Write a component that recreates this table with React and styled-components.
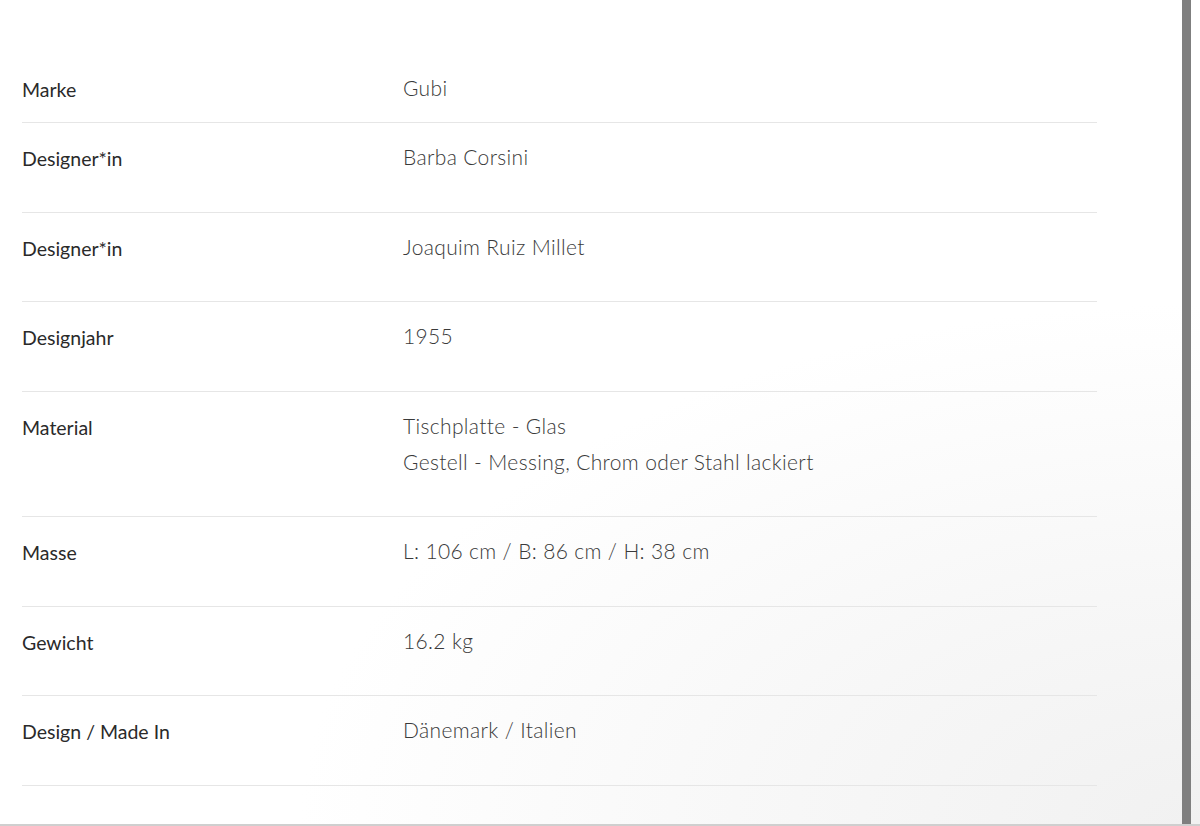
import styled, { createGlobalStyle } from "styled-components";

const GlobalStyle = createGlobalStyle`
  html, body {
    margin: 0;
    padding: 0;
    background: #ffffff;
  }
  * {
    box-sizing: border-box;
  }
`;

const SPECS = [
  { label: "Marke", values: ["Gubi"] },
  { label: "Designer*in", values: ["Barba Corsini"] },
  { label: "Designer*in", values: ["Joaquim Ruiz Millet"] },
  { label: "Designjahr", values: ["1955"] },
  {
    label: "Material",
    values: ["Tischplatte - Glas", "Gestell - Messing, Chrom oder Stahl lackiert"],
  },
  { label: "Masse", values: ["L: 106 cm / B: 86 cm / H: 38 cm"] },
  { label: "Gewicht", values: ["16.2 kg"] },
  { label: "Design / Made In", values: ["Dänemark / Italien"] },
];

const Page = styled.div`
  display: flex;
  width: 1200px;
  height: 826px;
  border-bottom: 2px solid #cfcfcf;
  background: radial-gradient(
    ellipse 900px 520px at 100% 100%,
    #f1f1f1 0%,
    #f7f7f7 45%,
    #ffffff 100%
  );
  overflow: hidden;
`;

const Content = styled.div`
  flex: 1;
  padding: 54px 85px 0 22px;
`;

const Edge = styled.div`
  width: 9px;
  margin-right: 9px;
  background: #7f7f7f;
`;

const Table = styled.div`
  display: flex;
  flex-direction: column;
`;

const Row = styled.div`
  display: grid;
  grid-template-columns: 381px 1fr;
  padding: 16px 0 ${(p) => (p.$first ? "16px" : "36.5px")};
  border-bottom: 1px solid #e6e6e6;
`;

const Label = styled.div`
  font-family: Lato, "Noto Sans", sans-serif;
  font-size: 19.5px;
  font-weight: 400;
  line-height: 34px;
  height: 36px;
  padding-top: 3px;
  color: #2a2a2a;
`;

const Values = styled.div`
  display: flex;
  flex-direction: column;
`;

const Value = styled.div`
  font-family: Lato, "Noto Sans", sans-serif;
  font-size: 21px;
  font-weight: 300;
  letter-spacing: 0.35px;
  line-height: 36px;
  color: #3a3a3a;
`;

export default function App() {
  return (
    <>
      <GlobalStyle />
      <Page>
        <Content>
          <Table>
            {SPECS.map((row, i) => (
              <Row key={i} $first={i === 0}>
                <Label>{row.label}</Label>
                <Values>
                  {row.values.map((v, j) => (
                    <Value key={j}>{v}</Value>
                  ))}
                </Values>
              </Row>
            ))}
          </Table>
        </Content>
        <Edge />
      </Page>
    </>
  );
}
